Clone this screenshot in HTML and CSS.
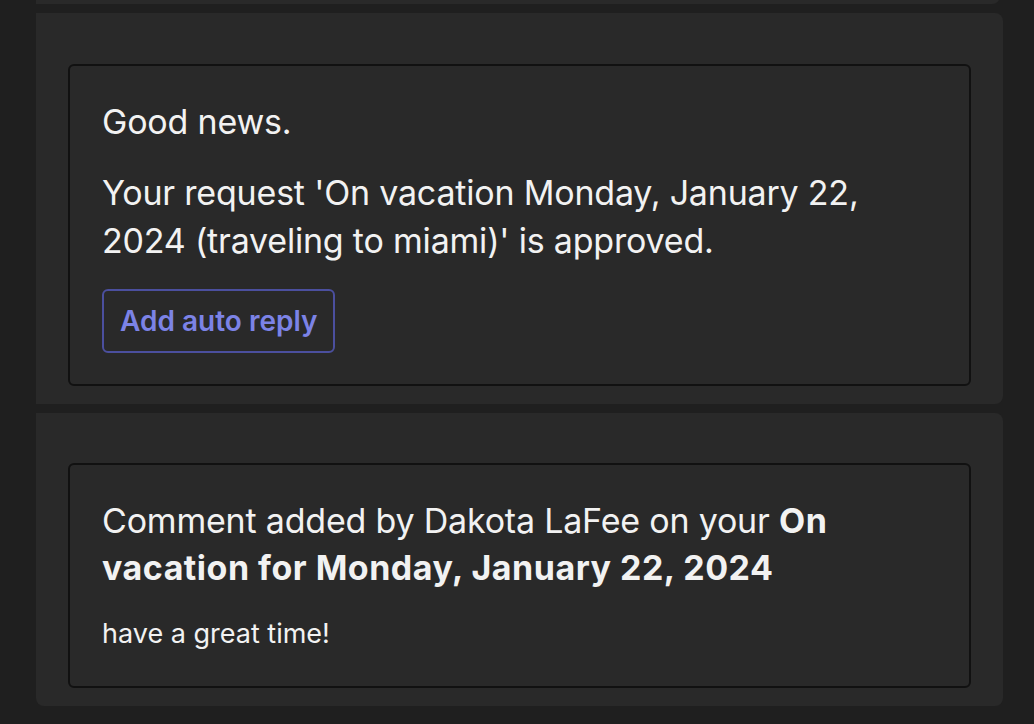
FILE: index.html
```html
<!DOCTYPE html>
<html>
<head>
<meta charset="utf-8">
<link rel="stylesheet" href="styles.css">
</head>
<body>
<div class="feed">
  <div class="card card-prev"></div>
  <div class="card card-first">
    <div class="box">
      <p class="lead">Good news.</p>
      <p class="lead lead-last">Your request 'On vacation Monday, January 22, 2024 (traveling to miami)' is approved.</p>
      <button class="btn">Add auto reply</button>
    </div>
  </div>
  <div class="card card-last">
    <div class="box box-comment">
      <p class="lead">Comment added by Dakota LaFee on your <strong>On vacation for Monday, January 22, 2024</strong></p>
      <p class="small">have a great time!</p>
    </div>
  </div>
</div>
</body>
</html>
```

FILE: styles.css
```css
html, body {
  margin: 0;
  padding: 0;
  background: #1f1f1f;
  font-family: Inter, "Noto Sans", sans-serif;
  color: #f2f2f2;
}
.feed {
  display: flex;
  flex-direction: column;
  gap: 9px;
  padding: 0 31px 0 36px;
  margin-top: -9px;
}
.card {
  background: #292929;
  padding: 50px 32px 18px 32px;
}
.card-prev {
  height: 13px;
  padding: 0;
  border-radius: 0 0 8px 0;
  margin-right: 3px;
}
.card-first {
  border-radius: 0 8px 8px 0;
  padding-top: 51px;
}
.card-last {
  border-radius: 0 8px 8px 8px;
}
.box {
  border: 2px solid #111111;
  border-radius: 6px;
  padding: 32px 32px 31px 32px;
}
.box-comment {
  padding-bottom: 34px;
}
.lead {
  margin: 0 0 23px 0;
  font-size: 34px;
  line-height: 48px;
  letter-spacing: -0.2px;
}
.lead-last { margin-bottom: 24px; }
.lead strong { font-weight: 700; letter-spacing: 0.5px; }
.card-last .lead { margin-bottom: 25px; line-height: 47px; }
.small {
  margin: 0;
  font-size: 27px;
  line-height: 36px;
}
.btn {
  display: block;
  height: 64px;
  padding: 0 16px;
  background: transparent;
  border: 2px solid #4b4f9e;
  border-radius: 6px;
  color: #7c83e6;
  font-family: Inter, "Noto Sans", sans-serif;
  font-weight: 600;
  font-size: 28px;
}
```
